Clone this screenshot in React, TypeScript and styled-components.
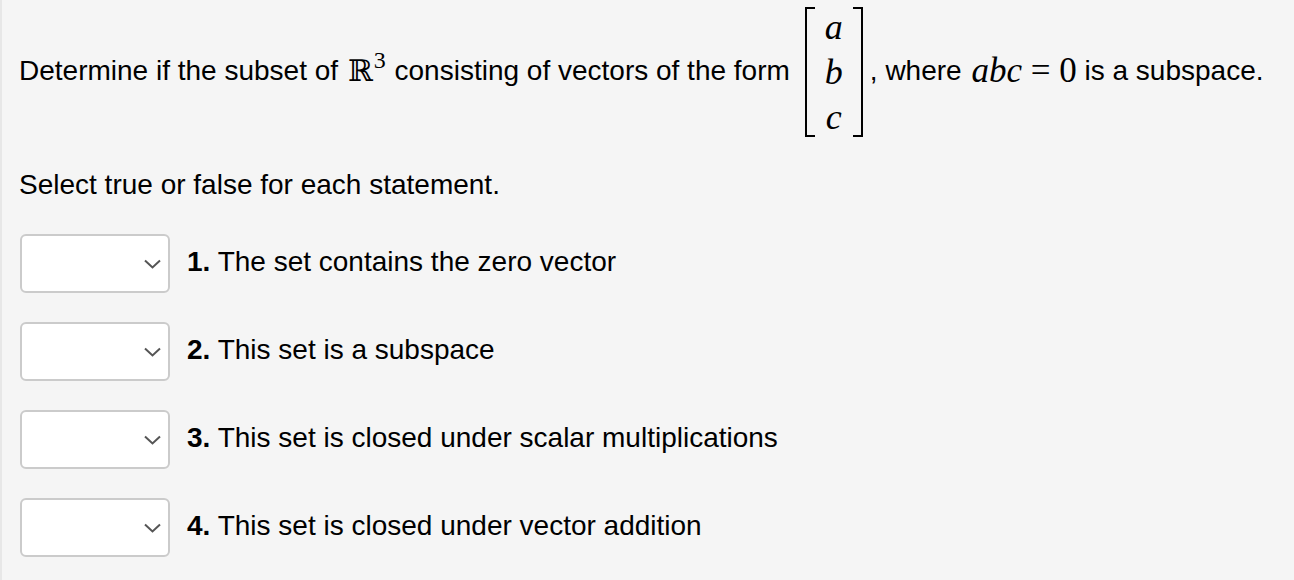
import React from "react";
import styled, { createGlobalStyle } from "styled-components";

const GlobalStyle = createGlobalStyle`
  html, body { margin: 0; padding: 0; }
  body {
    background: #f5f5f5;
    font-family: "Liberation Sans", Arial, sans-serif;
    color: #000;
  }
`;

const Page = styled.div`
  box-sizing: border-box;
  min-height: 580px;
  border-left: 2px solid #e7e7e7;
  padding: 0 20px 0 17px;
  font-size: 28px;
`;

const Question = styled.div`
  display: flex;
  align-items: center;
  white-space: pre;
  height: 139px;
  padding-top: 1px;
`;

const MathI = styled.span`
  font-family: "Liberation Serif", "Times New Roman", serif;
  font-style: italic;
  font-size: 35px;
  margin-left: 2px;
`;

const MathR = styled.span`
  font-family: "Liberation Serif", "Times New Roman", serif;
  font-size: 35px;
`;

const RealSet = styled.span`
  margin-left: 2px;
  margin-right: 1px;
`;

const Reals = styled.span`
  font-family: "DejaVu Serif", serif;
  font-size: 30px;
`;

const Sup = styled.sup`
  font-family: "Liberation Serif", serif;
  font-size: 24px;
  vertical-align: 13px;
  line-height: 0;
  margin-left: 1px;
`;

const Matrix = styled.span`
  display: inline-flex;
  align-items: stretch;
  margin: 0 7px 0 15px;
`;

const Bracket = styled.span<{ $side: "left" | "right" }>`
  width: 8px;
  margin: 5px 0 3px;
  border: 2.5px solid #000;
  ${(p) => (p.$side === "left" ? "border-right: none;" : "border-left: none;")}
`;

const Entries = styled.span`
  display: flex;
  flex-direction: column;
  align-items: center;
  width: 38px;
  padding-top: 3px;
  font-family: "Liberation Serif", "Times New Roman", serif;
  font-style: italic;
  font-size: 36px;
  line-height: 45px;
`;

const Instruction = styled.div`
  margin-top: 29px;
  line-height: 32px;
`;

const List = styled.div`
  display: flex;
  flex-direction: column;
  gap: 29px;
  margin-top: 33px;
`;

const Item = styled.div`
  display: flex;
  align-items: center;
  gap: 17px;
  line-height: 28px;
`;

const Label = styled.span`
  padding-bottom: 4px;
`;

const SelectWrap = styled.div`
  position: relative;
  margin-left: 1px;
  width: 150px;
  height: 59px;
  flex: none;
`;

const Select = styled.select`
  appearance: none;
  box-sizing: border-box;
  width: 100%;
  height: 100%;
  background: #fff;
  border: 2px solid #cbcbcb;
  border-radius: 6px;
  font: inherit;
  outline: none;
`;

const Chevron = styled.svg`
  position: absolute;
  right: 9px;
  top: 25px;
  pointer-events: none;
`;

const Num = styled.b`
  font-weight: bold;
`;

const statements = [
  "The set contains the zero vector",
  "This set is a subspace",
  "This set is closed under scalar multiplications",
  "This set is closed under vector addition",
];

export default function App() {
  return (
    <>
      <GlobalStyle />
      <Page>
        <Question>
          <span>Determine if the subset of </span>
          <RealSet>
            <Reals>ℝ</Reals>
            <Sup>3</Sup>
          </RealSet>
          <span> consisting of vectors of the form</span>
          <Matrix>
            <Bracket $side="left" />
            <Entries>
              <span>a</span>
              <span>b</span>
              <span>c</span>
            </Entries>
            <Bracket $side="right" />
          </Matrix>
          <span>, where </span>
          <MathI>abc</MathI>
          <MathR> = 0</MathR>
          <span> is a subspace.</span>
        </Question>
        <Instruction>Select true or false for each statement.</Instruction>
        <List>
          {statements.map((s, i) => (
            <Item key={i}>
              <SelectWrap>
                <Select defaultValue="">
                  <option value=""></option>
                  <option value="true">True</option>
                  <option value="false">False</option>
                </Select>
                <Chevron width="17" height="10" viewBox="0 0 17 10">
                  <path d="M1 1.5 L8.5 8.5 L16 1.5" fill="none" stroke="#555" strokeWidth="2" />
                </Chevron>
              </SelectWrap>
              <Label>
                <Num>{i + 1}.</Num> {s}
              </Label>
            </Item>
          ))}
        </List>
      </Page>
    </>
  );
}
